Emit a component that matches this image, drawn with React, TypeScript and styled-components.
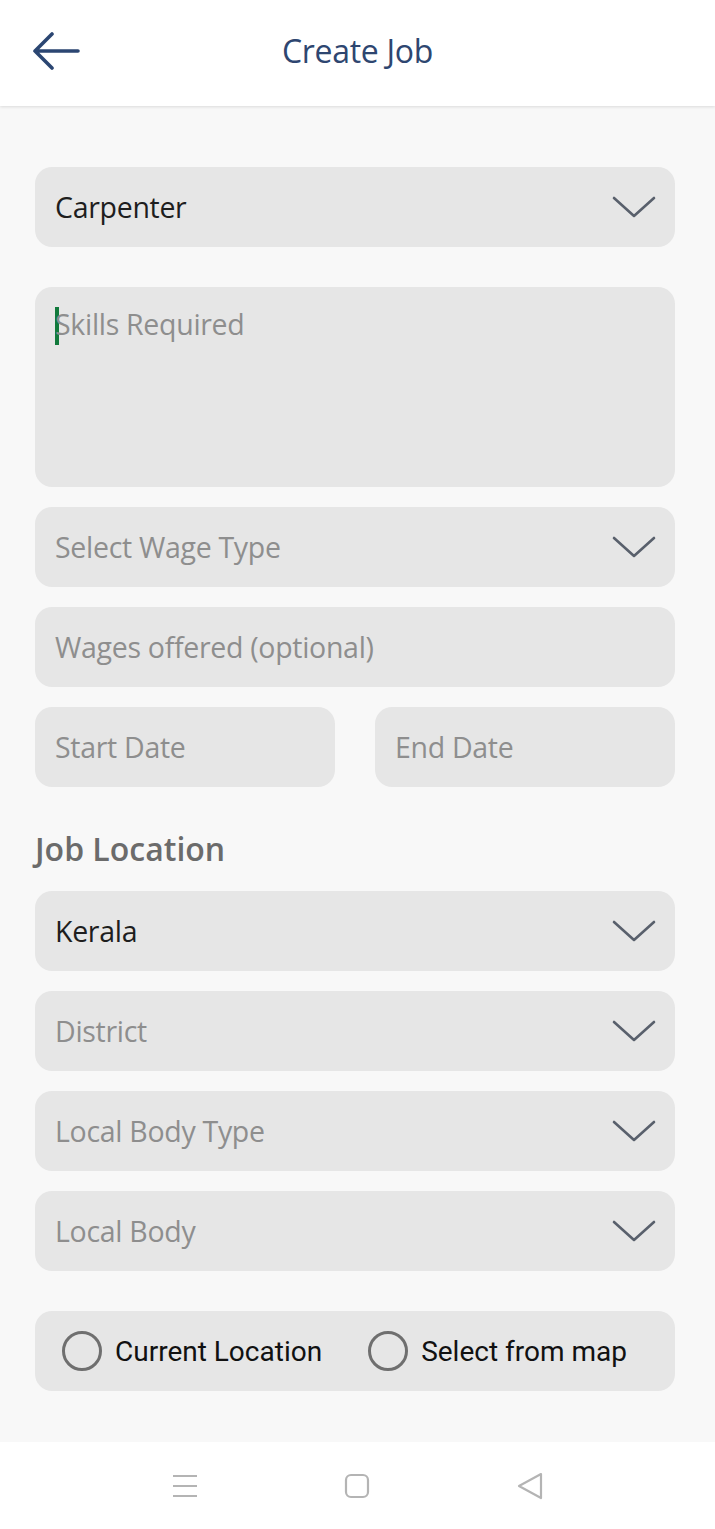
import { FC } from "react";
import styled, { createGlobalStyle } from "styled-components";

const GlobalStyle = createGlobalStyle`
    html, body {
        margin: 0;
        padding: 0;
        background: #f8f8f8;
    }
    #root {
        width: 715px;
        min-height: 1529px;
    }
`;

const Chevron: FC = () => (
    <svg width="44" height="24" viewBox="0 0 44 24" fill="none">
        <path
            d="M2 3 L22 21 L42 3"
            stroke="#59606c"
            strokeWidth="2.6"
            strokeLinecap="round"
            strokeLinejoin="round"
        />
    </svg>
);

const BackArrow: FC = () => (
    <svg width="48" height="40" viewBox="0 0 48 40" fill="none">
        <path
            d="M19 2 L2 19 L19 36 M2 19 L45 19"
            stroke="#2b4672"
            strokeWidth="3.6"
            strokeLinecap="round"
            strokeLinejoin="round"
        />
    </svg>
);

type SelectProps = { label: string; filled?: boolean };

const Select: FC<SelectProps> = ({ label, filled }) => (
    <Field>
        <FieldText $filled={filled}>{label}</FieldText>
        <Chevron />
    </Field>
);

const App: FC = () => {
    return (
        <Screen>
            <GlobalStyle />
            <Header>
                <BackButton>
                    <BackArrow />
                </BackButton>
                <Title>Create Job</Title>
            </Header>

            <Form>
                <Select label="Carpenter" filled />

                <TextArea>
                    <Caret />
                    <FieldText>Skills Required</FieldText>
                </TextArea>

                <Group>
                    <Select label="Select Wage Type" />
                    <Field>
                        <FieldText>Wages offered (optional)</FieldText>
                    </Field>
                    <DateRow>
                        <Field>
                            <FieldText>Start Date</FieldText>
                        </Field>
                        <Field>
                            <FieldText>End Date</FieldText>
                        </Field>
                    </DateRow>
                </Group>

                <SectionTitle>Job Location</SectionTitle>

                <Group>
                    <Select label="Kerala" filled />
                    <Select label="District" />
                    <Select label="Local Body Type" />
                    <Select label="Local Body" />
                </Group>

                <RadioBox>
                    <RadioOption>
                        <RadioCircle />
                        <RadioLabel>Current Location</RadioLabel>
                    </RadioOption>
                    <RadioOption>
                        <RadioCircle />
                        <RadioLabel>Select from map</RadioLabel>
                    </RadioOption>
                </RadioBox>
            </Form>

            <NavBar>
                <svg width="26" height="24" viewBox="0 0 26 24" fill="none">
                    <path
                        d="M1 2 H25 M1 12 H25 M1 22 H25"
                        stroke="#b4b4b4"
                        strokeWidth="2.2"
                    />
                </svg>
                <svg width="26" height="26" viewBox="0 0 26 26" fill="none">
                    <rect
                        x="2"
                        y="2"
                        width="22"
                        height="22"
                        rx="5"
                        stroke="#b4b4b4"
                        strokeWidth="2.2"
                    />
                </svg>
                <svg width="28" height="28" viewBox="0 0 28 28" fill="none">
                    <path
                        d="M25 2 L3 14 L25 26 Z"
                        stroke="#b4b4b4"
                        strokeWidth="2.2"
                        strokeLinejoin="round"
                    />
                </svg>
            </NavBar>
        </Screen>
    );
};

export default App;

const Screen = styled.div`
    width: 715px;
    min-height: 1529px;
    display: flex;
    flex-direction: column;
    background: #f8f8f8;
    font-family: "Open Sans", "Noto Sans", sans-serif;
`;

const Header = styled.header`
    height: 106px;
    background: #ffffff;
    display: flex;
    align-items: center;
    justify-content: center;
    position: relative;
    box-shadow: 0 1px 3px rgba(0, 0, 0, 0.12);
    z-index: 1;
    box-sizing: border-box;
    padding-bottom: 6px;
`;

const BackButton = styled.div`
    position: absolute;
    left: 33px;
    top: 32px;
    display: flex;
`;

const Title = styled.h1`
    margin: 0;
    font-size: 32px;
    font-weight: 400;
    color: #2e4670;
    letter-spacing: -0.3px;
`;

const Form = styled.main`
    flex: 1;
    display: flex;
    flex-direction: column;
    gap: 40px;
    padding: 61px 40px 51px 35px;
`;

const Group = styled.div`
    display: flex;
    flex-direction: column;
    gap: 20px;
`;

const Field = styled.div`
    height: 80px;
    flex-shrink: 0;
    border-radius: 17px;
    background: #e6e6e6;
    display: flex;
    align-items: center;
    justify-content: space-between;
    padding: 0 19px 0 20px;
    box-sizing: border-box;
`;

const FieldText = styled.span<{ $filled?: boolean }>`
    font-size: 28.5px;
    letter-spacing: -0.3px;
    color: ${(p) => (p.$filled ? "#1e1e1e" : "#8e8e8e")};
`;

const TextArea = styled.div`
    height: 200px;
    flex-shrink: 0;
    border-radius: 17px;
    background: #e6e6e6;
    padding: 18px 20px;
    box-sizing: border-box;
    display: flex;
    align-items: flex-start;
    margin-bottom: -20px;
`;

const Caret = styled.span`
    width: 4px;
    height: 38px;
    margin-top: 2px;
    background: #127a3c;
    margin-right: -4px;
`;

const DateRow = styled.div`
    display: flex;
    gap: 40px;

    & > ${Field} {
        flex: 1;
    }
`;

const SectionTitle = styled.h2`
    margin: 0 0 -19px 0;
    font-size: 32px;
    font-weight: 600;
    color: #6b6b6b;
    letter-spacing: 0px;
`;

const RadioBox = styled.div`
    height: 80px;
    flex-shrink: 0;
    border-radius: 17px;
    background: #e6e6e6;
    display: flex;
    align-items: center;
    gap: 46px;
    padding: 0 27px;
    box-sizing: border-box;
`;

const RadioOption = styled.label`
    display: flex;
    align-items: center;
    gap: 13px;
`;

const RadioCircle = styled.span`
    width: 34px;
    height: 34px;
    border-radius: 50%;
    border: 3px solid #6f6f6f;
`;

const RadioLabel = styled.span`
    font-family: Roboto, "Liberation Sans", sans-serif;
    font-size: 28px;
    color: #111111;
`;

const NavBar = styled.nav`
    height: 87px;
    background: #ffffff;
    display: flex;
    align-items: center;
    justify-content: center;
    gap: 146px;
`;
